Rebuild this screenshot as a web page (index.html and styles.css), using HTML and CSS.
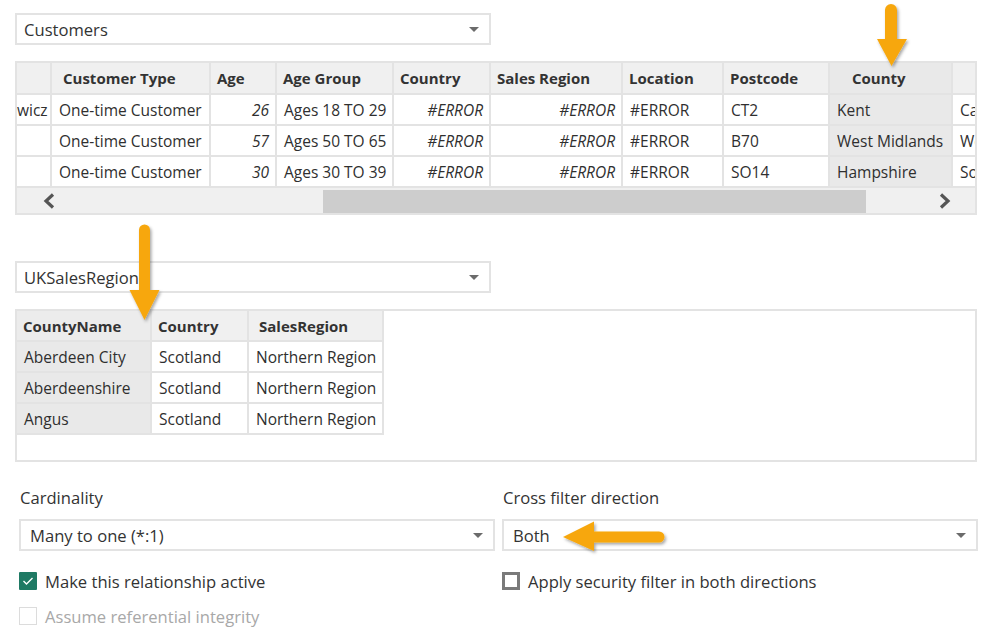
FILE: index.html
```html
<!DOCTYPE html>
<html>
<head>
<meta charset="utf-8">
<link rel="stylesheet" href="styles.css">
</head>
<body>
<div class="page">
  <div class="select select-top"><span>Customers</span><i class="caret"></i></div>

  <div class="grid1">
    <div class="clip">
      <table class="t1">
        <colgroup>
          <col style="width:35px"><col style="width:159px"><col style="width:66px"><col style="width:117px"><col style="width:97px"><col style="width:132px"><col style="width:101px"><col style="width:106px"><col style="width:123px"><col style="width:60px">
        </colgroup>
        <thead>
          <tr>
            <th></th>
            <th class="h-ct">Customer Type</th>
            <th>Age</th>
            <th>Age Group</th>
            <th>Country</th>
            <th>Sales Region</th>
            <th>Location</th>
            <th>Postcode</th>
            <th class="sel h-county">County</th>
            <th></th>
          </tr>
        </thead>
        <tbody>
          <tr>
            <td class="cut">wicz</td><td>One-time Customer</td><td class="num">26</td><td>Ages 18 TO 29</td><td class="num">#ERROR</td><td class="num">#ERROR</td><td>#ERROR</td><td>CT2</td><td class="sel">Kent</td><td>Canterbury</td>
          </tr>
          <tr>
            <td class="cut"></td><td>One-time Customer</td><td class="num">57</td><td>Ages 50 TO 65</td><td class="num">#ERROR</td><td class="num">#ERROR</td><td>#ERROR</td><td>B70</td><td class="sel">West Midlands</td><td>West Bromwich</td>
          </tr>
          <tr>
            <td class="cut"></td><td>One-time Customer</td><td class="num">30</td><td>Ages 30 TO 39</td><td class="num">#ERROR</td><td class="num">#ERROR</td><td>#ERROR</td><td>SO14</td><td class="sel">Hampshire</td><td>Southampton</td>
          </tr>
        </tbody>
      </table>
    </div>
    <div class="hscroll">
      <svg class="chev chev-l" width="14" height="16" viewBox="0 0 14 16"><polyline points="11,1.5 4,8 11,14.5" fill="none" stroke="#555" stroke-width="3.2"/></svg>
      <div class="thumb"></div>
      <svg class="chev chev-r" width="14" height="16" viewBox="0 0 14 16"><polyline points="3,1.5 10,8 3,14.5" fill="none" stroke="#555" stroke-width="3.2"/></svg>
    </div>
  </div>

  <div class="select select-mid"><span>UKSalesRegions</span><i class="caret"></i></div>

  <div class="grid2">
    <table class="t2">
      <colgroup><col style="width:135px"><col style="width:97px"><col style="width:135px"></colgroup>
      <thead>
        <tr><th class="sel">CountyName</th><th>Country</th><th class="h-sr">SalesRegion</th></tr>
      </thead>
      <tbody>
        <tr><td class="sel">Aberdeen City</td><td>Scotland</td><td>Northern Region</td></tr>
        <tr><td class="sel">Aberdeenshire</td><td>Scotland</td><td>Northern Region</td></tr>
        <tr><td class="sel">Angus</td><td>Scotland</td><td>Northern Region</td></tr>
      </tbody>
    </table>
  </div>

  <div class="options">
    <div class="col">
      <div class="label">Cardinality</div>
      <div class="select"><span>Many to one (*:1)</span><i class="caret"></i></div>
      <label class="check"><span class="box on"><svg width="12" height="10" viewBox="0 0 12 10"><polyline points="1.5,5 4.5,8 10.5,2" fill="none" stroke="#fff" stroke-width="1.4"/></svg></span>Make this relationship active</label>
      <label class="check disabled"><span class="box dis"></span>Assume referential integrity</label>
    </div>
    <div class="col">
      <div class="label">Cross filter direction</div>
      <div class="select"><span>Both</span><i class="caret"></i></div>
      <label class="check"><span class="box off"></span>Apply security filter in both directions</label>
    </div>
  </div>
</div>

<svg class="arrows" width="990" height="642" viewBox="0 0 990 642">
  <defs>
    <filter id="sh" x="-50%" y="-50%" width="200%" height="200%">
      <feDropShadow dx="1.5" dy="2" stdDeviation="1.6" flood-color="#000" flood-opacity="0.35"/>
    </filter>
  </defs>
  <g fill="#f7a70b" stroke="none" filter="url(#sh)">
    <path d="M885 10 a6 6 0 0 1 12 0 V39 H907 L891.5 66 L877 39 H885 Z"/>
    <path d="M139 230 a5.5 5.5 0 0 1 11 0 V290 H159.5 L144.5 320 L129.5 290 H139 Z"/>
    <path d="M659 531.5 a5.5 5.5 0 0 1 0 11 H594 V551 L563 537 L594 521.5 V531.5 Z"/>
  </g>
</svg>
</body>
</html>
```

FILE: styles.css
```css
* { box-sizing: border-box; }
html, body { margin: 0; padding: 0; background: #fff; }
body {
  font-family: "Open Sans", "Noto Sans", "Liberation Sans", sans-serif;
  color: #2b2b2b;
  width: 990px;
  height: 642px;
  overflow: hidden;
  position: relative;
}
.page { padding: 13px 0 0 15px; }

.select {
  width: 476px;
  height: 32px;
  border: 2px solid #e3e3e3;
  display: flex;
  align-items: center;
  justify-content: space-between;
  padding: 0 10px 0 7px;
  font-size: 16.6px;
  color: #333;
  background: #fff;
}
.caret {
  width: 0; height: 0;
  border-left: 5px solid transparent;
  border-right: 5px solid transparent;
  border-top: 5px solid #6b6b6b;
  margin-top: 1px;
}

.grid1 {
  margin-top: 16px;
  width: 962px;
  border: 2px solid #e3e3e3;
}
.clip { overflow: hidden; width: 958px; }
table { border-collapse: separate; border-spacing: 0; table-layout: fixed; }
.t1 { width: 996px; }
th, td {
  border-right: 2px solid #e3e3e3;
  border-bottom: 2px solid #e3e3e3;
  white-space: nowrap;
  overflow: hidden;
  text-align: left;
  padding: 0 6px;
  color: #2f2f2f;
}
th { background: #f0f0f0; font-weight: 700; height: 32px; color: #333; font-size: 15px; }
td { background: #fff; height: 31px; padding-left: 7px; font-weight: 400; font-size: 15.5px; }
.t1 .sel { background: #e9e9e9; }
.h-ct { padding-left: 11px; }
.h-county { padding-left: 22px; }
.num { text-align: right; font-style: italic; padding-right: 6px; }
td.cut { padding-left: 0; text-overflow: clip; }

.hscroll {
  height: 25px;
  background: #f0f0f0;
  display: flex;
  align-items: center;
}
.chev-l { margin-left: 25px; }
.thumb { margin-left: 267px; width: 543px; height: 23px; background: #cdcdcd; margin-top: 1px; }
.chev-r { margin-left: 72px; }

.select-mid { margin-top: 46px; }

.grid2 {
  margin-top: 16px;
  width: 962px;
  height: 153px;
  border: 2px solid #e3e3e3;
}
.t2 { width: 367px; }
.t2 th { height: 31px; }
.t2 td { height: 31px; }
.t2 .sel { background: #e9e9e9; }
.t2 th.sel { background: #ececec; }
.h-sr { padding-left: 10px; }

.options {
  display: grid;
  grid-template-columns: 476px 476px;
  column-gap: 7px;
  margin-left: 4px;
  margin-top: 26px;
}
.col { display: flex; flex-direction: column; }
.label { font-size: 16.6px; line-height: 20px; height: 20px; color: #333; padding-left: 1px; margin-bottom: 11px; }
.options .select { padding-left: 9px; }
.check {
  display: flex;
  align-items: center;
  height: 22px;
  margin-top: 19px;
  font-size: 16.6px;
  color: #333;
}
.check.disabled { margin-top: 13px; color: #a8a8a8; }
.box {
  width: 18px; height: 18px;
  margin-right: 8px;
  display: flex; align-items: center; justify-content: center;
  flex: none;
}
.box.on { background: #1f7a64; border-radius: 1px; }
.box.off { border: 3px solid #7a7a7a; }
.box.dis { border: 1px solid #dcdcdc; }

.arrows { position: absolute; left: 0; top: 0; pointer-events: none; }
```
